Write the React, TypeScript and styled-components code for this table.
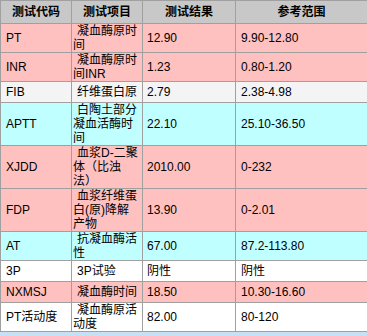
import styled, { createGlobalStyle } from 'styled-components';

type Tone = 'pink' | 'cyan' | 'gray' | 'white';

type LabRow = {
  code: string;
  name: string[];
  result: string;
  range: string;
  tone: Tone;
};

// test names are split the way the narrow column wraps them
const rows: LabRow[] = [
  { code: 'PT', name: ['凝血酶原时', '间'], result: '12.90', range: '9.90-12.80', tone: 'pink' },
  { code: 'INR', name: ['凝血酶原时', '间INR'], result: '1.23', range: '0.80-1.20', tone: 'pink' },
  { code: 'FIB', name: ['纤维蛋白原'], result: '2.79', range: '2.38-4.98', tone: 'gray' },
  { code: 'APTT', name: ['白陶土部分', '凝血活酶时', '间'], result: '22.10', range: '25.10-36.50', tone: 'cyan' },
  { code: 'XJDD', name: ['血浆D-二聚', '体（比浊', '法）'], result: '2010.00', range: '0-232', tone: 'pink' },
  { code: 'FDP', name: ['血浆纤维蛋', '白(原)降解', '产物'], result: '13.90', range: '0-2.01', tone: 'pink' },
  { code: 'AT', name: ['抗凝血酶活', '性'], result: '67.00', range: '87.2-113.80', tone: 'cyan' },
  { code: '3P', name: ['3P试验'], result: '阴性', range: '阴性', tone: 'white' },
  { code: 'NXMSJ', name: ['凝血酶时间'], result: '18.50', range: '10.30-16.60', tone: 'pink' },
  { code: 'PT活动度', name: ['凝血酶原活', '动度'], result: '82.00', range: '80-120', tone: 'white' },
];

const toneColors: Record<Tone, string> = {
  pink: '#ffc0c0',
  cyan: '#c0ffff',
  gray: '#f4f4f4',
  white: '#ffffff',
};

const fontStack = `"Liberation Sans", "Noto Sans CJK SC", sans-serif`;

const GlobalStyle = createGlobalStyle`
  body {
    margin: 0;
    background: #ffffff;
    font-family: ${fontStack};
  }
`;

const App = () => {
  return (
    <>
      <GlobalStyle />
      <Wrapper>
        <ResultTable>
          <colgroup>
            <col style={{ width: 71 }} />
            <col style={{ width: 71 }} />
            <col style={{ width: 93 }} />
            <col style={{ width: 132 }} />
          </colgroup>
          <thead>
            <tr>
              <HeadCell>测试代码</HeadCell>
              <HeadCell>测试项目</HeadCell>
              <HeadCell>测试结果</HeadCell>
              <HeadCell>参考范围</HeadCell>
            </tr>
          </thead>
          <tbody>
            {rows.map((row) => (
              <Row key={row.code} $tone={row.tone}>
                <Cell>{row.code}</Cell>
                <NameCell>
                  {row.name.map((line, idx) => (
                    <NameLine key={idx} $first={idx === 0}>
                      {line}
                    </NameLine>
                  ))}
                </NameCell>
                <Cell $pad={4}>{row.result}</Cell>
                <Cell>{row.range}</Cell>
              </Row>
            ))}
          </tbody>
        </ResultTable>
        <BottomStrip />
      </Wrapper>
    </>
  );
};

export default App;

const Wrapper = styled.div`
  width: 367px;
  height: 336px;
  display: flex;
  flex-direction: column;
`;

const ResultTable = styled.table`
  width: 367px;
  table-layout: fixed;
  border-collapse: collapse;
  font-family: ${fontStack};
  font-size: 12px;
  line-height: 14px;
  color: #000000;
`;

const HeadCell = styled.th`
  height: 22px;
  padding: 0;
  background-color: #c8c8c8;
  border: 1px solid #a0a0a0;
  font-size: 12px;
  line-height: 14px;
  font-weight: bold;
  text-align: center;
  vertical-align: middle;
`;

const Row = styled.tr<{ $tone: Tone }>`
  background-color: ${({ $tone }) => toneColors[$tone]};
`;

const Cell = styled.td<{ $pad?: number }>`
  height: 20px;
  padding: 0 3px 0 ${({ $pad }) => $pad ?? 5}px;
  border: 1px solid #a0a0a0;
  font-size: 12px;
  line-height: 14px;
  vertical-align: middle;
  text-align: left;
  white-space: nowrap;
`;

const NameCell = styled.td`
  height: 20px;
  padding: 0 0 0 1px;
  border: 1px solid #a0a0a0;
  font-size: 12px;
  line-height: 14px;
  vertical-align: middle;
  text-align: left;
  white-space: nowrap;
  overflow: hidden;
`;

const NameLine = styled.div<{ $first: boolean }>`
  height: 14px;
  line-height: 14px;
  padding-left: ${({ $first }) => ($first ? 4 : 0)}px;
`;

const BottomStrip = styled.div`
  height: 4px;
  background: #c8e0f4;
`;
